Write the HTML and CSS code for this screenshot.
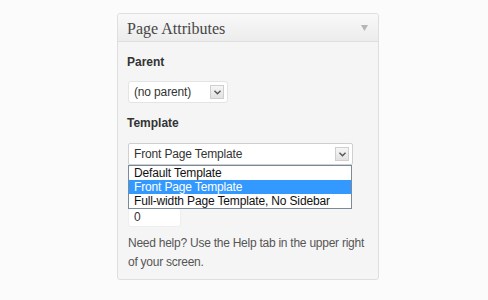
FILE: index.html
```html
<!DOCTYPE html>
<html>
<head>
<meta charset="utf-8">
<link rel="stylesheet" href="styles.css">
</head>
<body>
<div class="box">
  <div class="hd">
    <span class="title">Page Attributes</span>
    <svg class="toggle" width="7" height="6" viewBox="0 0 7 6"><path d="M0 0H7L3.5 6Z" fill="#b5b5b5"/></svg>
  </div>
  <div class="inside">
    <p class="label">Parent</p>
    <div class="select sel-parent">
      <span class="val">(no parent)</span>
      <span class="arrow"><svg width="7" height="5" viewBox="0 0 7 5"><path d="M0.5 0.8L3.5 3.8L6.5 0.8" fill="none" stroke="#555" stroke-width="1.4"/></svg></span>
    </div>
    <p class="label">Template</p>
    <div class="tpl-wrap">
      <div class="select sel-tpl">
        <span class="val">Front Page Template</span>
        <span class="arrow"><svg width="7" height="5" viewBox="0 0 7 5"><path d="M0.5 0.8L3.5 3.8L6.5 0.8" fill="none" stroke="#555" stroke-width="1.4"/></svg></span>
      </div>
      <ul class="list">
        <li>Default Template</li>
        <li class="on">Front Page Template</li>
        <li>Full-width Page Template, No Sidebar</li>
      </ul>
    </div>
    <div class="input">0</div>
    <p class="help">Need help? Use the Help tab in the upper right of your screen.</p>
  </div>
</div>
</body>
</html>
```

FILE: styles.css
```css
html, body {
  margin: 0;
  padding: 0;
  background: #fbfbfb;
}
body {
  padding: 13px 0 0 117px;
  font-family: "Liberation Sans", Arial, sans-serif;
}
.box {
  width: 260px;
  border: 1px solid #dfdfdf;
  border-radius: 3px;
  background: #f5f5f5;
}
.hd {
  height: 27px;
  border-bottom: 1px solid #dfdfdf;
  background: linear-gradient(#f9f9f9, #ececec);
  display: flex;
  align-items: center;
  justify-content: space-between;
  padding: 0 10px 0 9px;
  border-radius: 3px 3px 0 0;
}
.title {
  font-family: "Liberation Serif", Georgia, serif;
  font-size: 16px;
  color: #464646;
  position: relative;
  top: 1px;
}
.toggle {
  margin-top: 1px;
}
.inside {
  padding: 1px 8px 7px 9px;
}
.label {
  margin: 11px 0 11px;
  font-size: 12px;
  font-weight: bold;
  color: #333;
  line-height: 16px;
}
.label + .tpl-wrap {
  margin-top: 12px;
}
.select + .label {
  margin-top: 12px;
}
.select {
  height: 20px;
  background: #fff;
  border: 1px solid #e4e4e4;
  border-radius: 3px;
  display: flex;
  align-items: center;
  justify-content: space-between;
  padding: 0 3px 0 5px;
  font-size: 12px;
  letter-spacing: -0.15px;
  color: #333;
  margin-left: 1px;
}
.sel-parent {
  width: 90px;
}
.sel-tpl {
  width: 215px;
  border-color: #cfcfcf;
  border-radius: 2px;
}
.arrow {
  width: 12px;
  height: 12px;
  border: 1px solid #cfcfcf;
  background: linear-gradient(#f6f6f6, #e2e2e2);
  display: flex;
  align-items: center;
  justify-content: center;
}
.tpl-wrap {
  position: relative;
}
.list {
  position: absolute;
  left: 1px;
  top: 22px;
  width: 222px;
  margin: 0;
  padding: 0;
  list-style: none;
  background: #fff;
  border: 1px solid #7a8a99;
  font-size: 12px;
  letter-spacing: -0.15px;
  line-height: 14px;
  z-index: 2;
}
.list li {
  padding: 0 0 0 5px;
  color: #111;
}
.list li.on {
  background: #3399ff;
  color: #fff;
}
.input {
  width: 46px;
  height: 17px;
  margin: 43px 0 0 1px;
  background: #fff;
  border: 1px solid #eee;
  border-radius: 3px;
  font-size: 12px;
  color: #333;
  padding-left: 5px;
  line-height: 17px;
}
.help {
  margin: 7px 0 0 1px;
  font-size: 12px;
  letter-spacing: -0.25px;
  line-height: 19px;
  color: #555;
}
```
